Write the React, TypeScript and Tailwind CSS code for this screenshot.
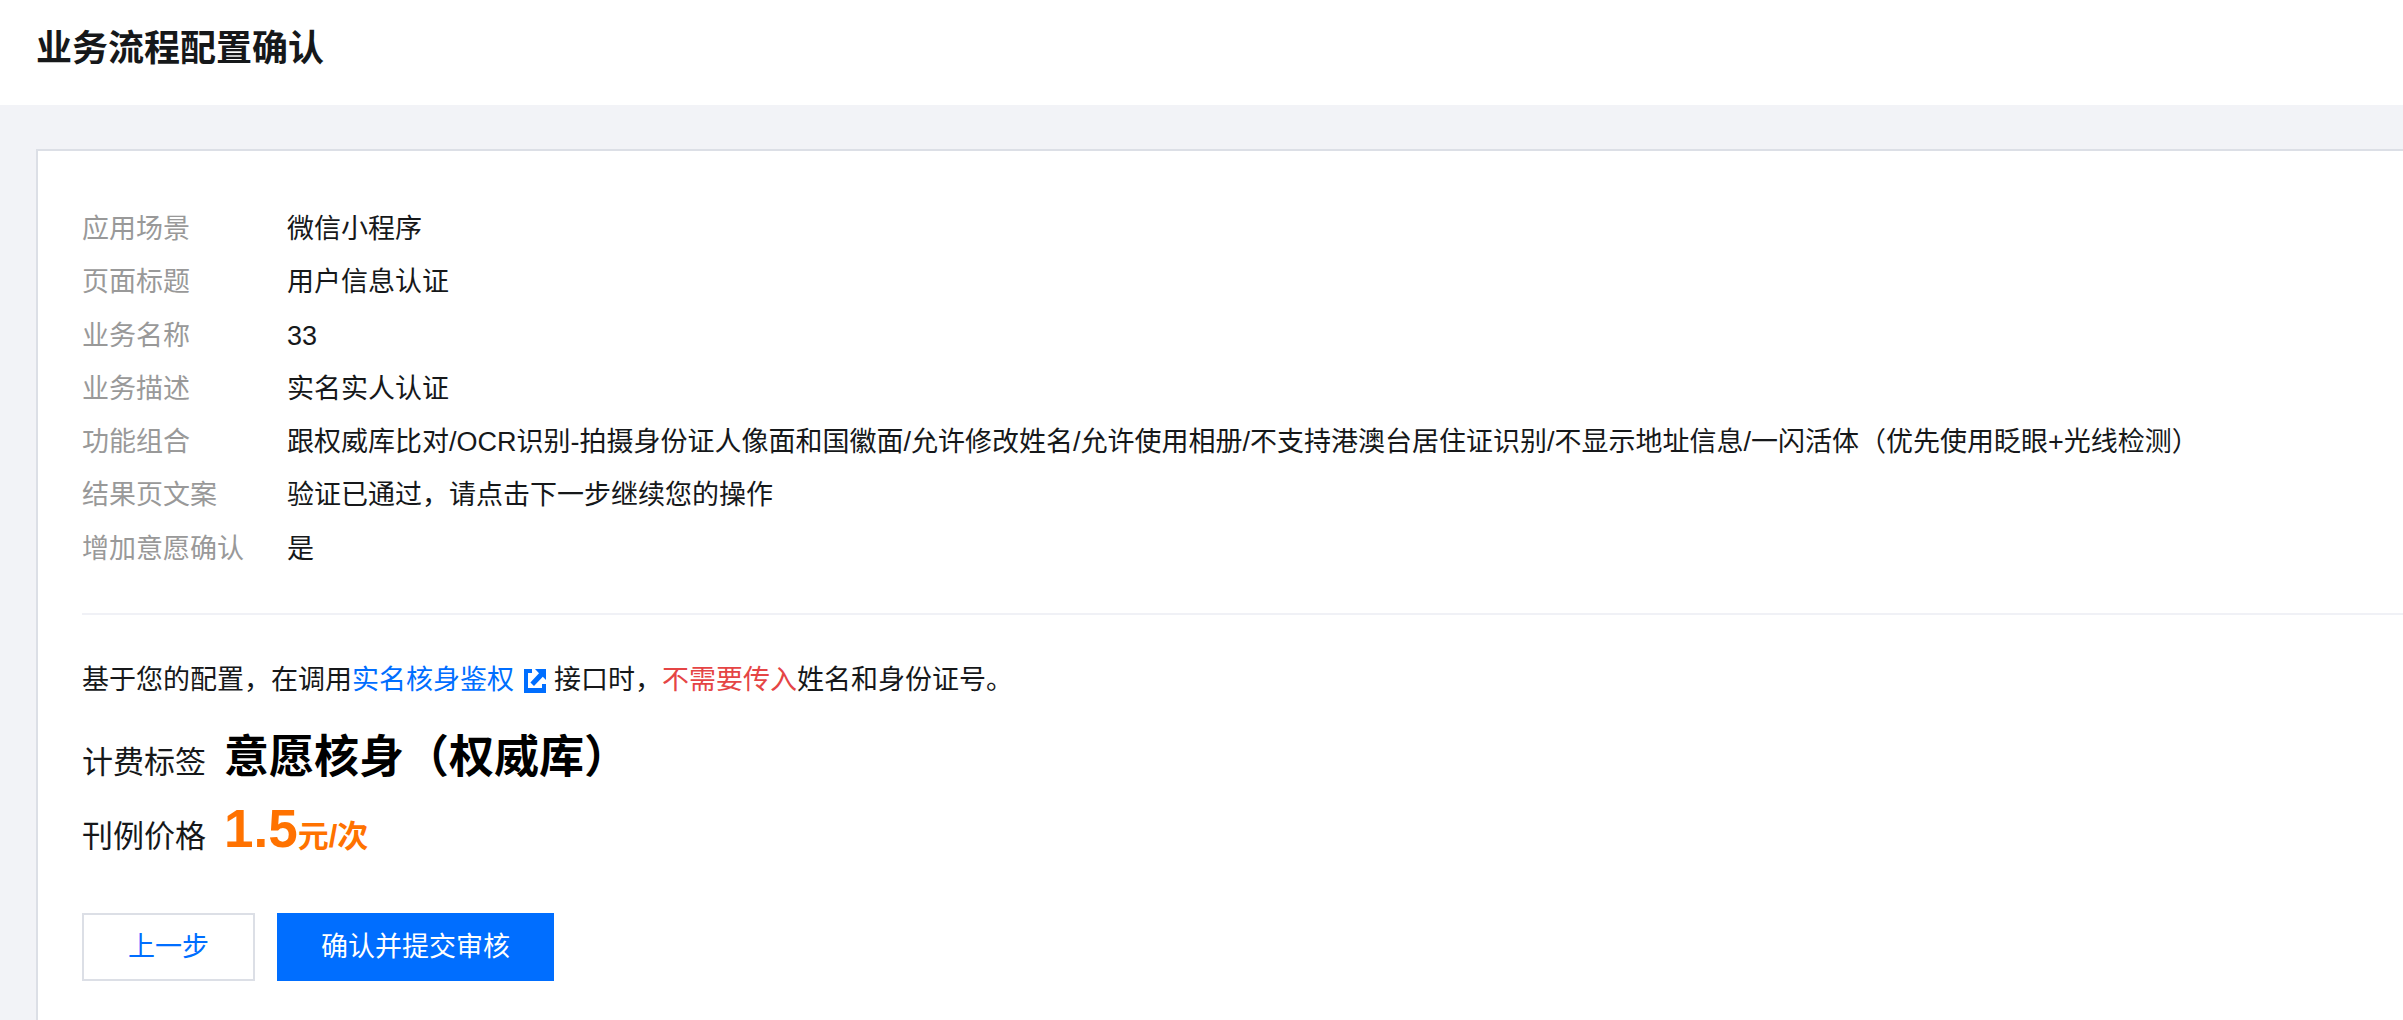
import React from "react";

const details = [
  { label: "应用场景", value: "微信小程序" },
  { label: "页面标题", value: "用户信息认证" },
  { label: "业务名称", value: "33" },
  { label: "业务描述", value: "实名实人认证" },
  {
    label: "功能组合",
    value:
      "跟权威库比对/OCR识别-拍摄身份证人像面和国徽面/允许修改姓名/允许使用相册/不支持港澳台居住证识别/不显示地址信息/一闪活体（优先使用眨眼+光线检测）",
  },
  { label: "结果页文案", value: "验证已通过，请点击下一步继续您的操作" },
  { label: "增加意愿确认", value: "是" },
];

function ExternalIcon() {
  return (
    <svg className="ml-[10px] mr-2 inline-block h-6 w-[22px] align-[-4px]" viewBox="0 0 22 24" aria-hidden="true">
      <path
        fill="currentColor"
        d="M0 0H8V4H4V19H18V15H22V24H0ZM11 0H22V11L18.8 7.8L10 17L6.4 13.4L15 4.2Z"
      />
    </svg>
  );
}

function Header() {
  return (
    <header className="bg-white px-9 pt-[22px] pb-[30px]">
      <h1 className="text-[36px] leading-[53px] font-bold text-[#16181a]">业务流程配置确认</h1>
    </header>
  );
}

function DetailList() {
  return (
    <dl className="grid min-h-[373px] grid-cols-[205px_1fr] leading-[53px]">
      {details.map((item) => (
        <React.Fragment key={item.label}>
          <dt className="text-[#999999]">{item.label}</dt>
          <dd>{item.value}</dd>
        </React.Fragment>
      ))}
    </dl>
  );
}

export default function App() {
  return (
    <div className="flex min-h-screen flex-col bg-[#f2f3f7] font-['Liberation_Sans','Noto_Sans_CJK_SC',sans-serif] text-[27px] text-[#16181a]">
      <Header />
      <main className="flex grow flex-col pt-11 pl-9">
        <section className="grow border-t-2 border-l-2 border-[#dcdfe6] bg-white pt-[52px] pb-10 pl-11">
          <DetailList />
          <hr className="mt-[37px] border-t-2 border-[#f0f1f6]" />
          <p className="mt-[45px] leading-10">
            基于您的配置，在调用
            <a href="#api" className="text-[#006eff]">
              实名核身鉴权
              <ExternalIcon />
            </a>
            接口时，<span className="text-[#e54545]">不需要传入</span>姓名和身份证号。
          </p>
          <div className="mt-6 flex items-baseline gap-[18px] leading-[68px]">
            <span className="text-[31px]">计费标签</span>
            <strong className="text-[45px] font-bold text-black">意愿核身（权威库）</strong>
          </div>
          <div className="-mt-[2px] flex items-baseline gap-[18px] leading-[68px]">
            <span className="text-[31px]">刊例价格</span>
            <strong className="text-[31px] font-bold text-[#ff7200]">
              <span className="text-[53px]">1.5</span>元/次
            </strong>
          </div>
          <div className="mt-[42px] flex gap-[22px]">
            <button type="button" className="h-[68px] border-2 border-[#dcdfe6] bg-white px-11 text-[#006eff]">
              上一步
            </button>
            <button type="button" className="h-[68px] bg-[#006eff] px-11 text-white">
              确认并提交审核
            </button>
          </div>
        </section>
      </main>
    </div>
  );
}
